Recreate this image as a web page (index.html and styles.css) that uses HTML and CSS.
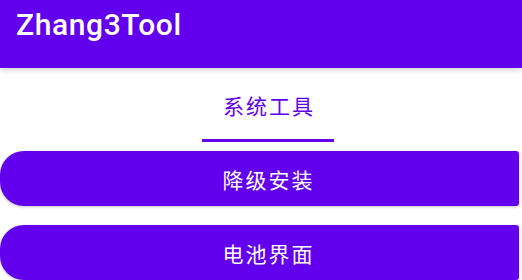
FILE: index.html
```html
<!DOCTYPE html>
<html lang="zh">
<head>
    <meta charset="UTF-8">
    <title>Zhang3Tool</title>
    <link rel="stylesheet" href="styles.css">
</head>
<body>
    <header class="app-bar">
        <h1 class="app-title">Zhang3Tool</h1>
    </header>

    <nav class="tabs">
        <div class="tab tab-active">系统工具</div>
    </nav>

    <main class="actions">
        <button class="action-btn">降级安装</button>
        <button class="action-btn">电池界面</button>
    </main>
</body>
</html>
```

FILE: styles.css
```css
html, body {
    margin: 0;
    padding: 0;
    overflow: hidden;
}

body {
    width: 522px;
    height: 280px;
    background: #ffffff;
    font-family: Roboto, "Noto Sans CJK SC", sans-serif;
}

.app-bar {
    position: relative;
    z-index: 1;
    height: 68px;
    background: #6200ee;
    box-shadow: 0 2px 6px rgba(0,0,0,0.18);
    display: flex;
    align-items: flex-start;
    padding-left: 16px;
}

.app-title {
    margin: 0;
    padding-top: 7px;
    color: #ffffff;
    font-size: 30px;
    font-weight: 500;
    letter-spacing: 0.6px;
    line-height: 36px;
}

.tabs {
    display: flex;
    justify-content: center;
    height: 74px;
    padding-left: 14px;
}

.tab {
    width: 132px;
    box-sizing: border-box;
    display: flex;
    align-items: center;
    justify-content: center;
    color: #6200ee;
    font-family: "Noto Sans CJK SC", sans-serif;
    font-size: 21px;
    letter-spacing: 2px;
    padding-left: 2px;
    padding-top: 2px;
}

.tab-active {
    border-bottom: 3px solid #6200ee;
}

.actions {
    display: flex;
    flex-direction: column;
    gap: 19px;
    padding-top: 9px;
}

.action-btn {
    width: 519px;
    height: 55px;
    border: none;
    border-radius: 24px 3px 3px 24px;
    background: #6200ee;
    color: #ffffff;
    font-family: "Noto Sans CJK SC", sans-serif;
    font-size: 21px;
    letter-spacing: 2px;
    padding: 0 0 0 18px;
    box-shadow: 0 1px 3px rgba(0,0,0,0.25);
    cursor: pointer;
}
```
